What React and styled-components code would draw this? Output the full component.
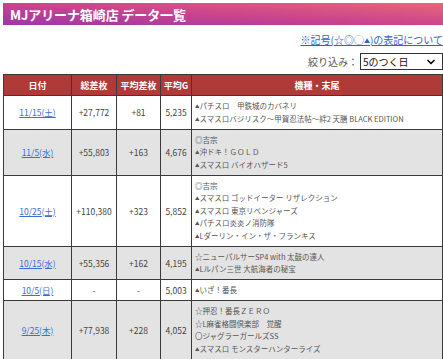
import React from "react";
import styled, { createGlobalStyle } from "styled-components";
import { ChevronDown } from "lucide-react";

const GlobalStyle = createGlobalStyle`
  body {
    margin: 0;
    background: #fff;
    font-family: "Noto Sans CJK JP", "Noto Sans", sans-serif;
  }
`;

const Page = styled.div`
  width: 440px;
  padding: 3px 0 0 3px;
`;

const TitleBar = styled.h1`
  margin: 0;
  height: 22px;
  padding-left: 7px;
  display: flex;
  align-items: center;
  background: linear-gradient(to top right, #9a38a8 0%, #c8428e 45%, #e8667a 100%);
  color: #fff;
  font-size: 13px;
  font-weight: 700;
  letter-spacing: -0.1px;
`;

const NoteRow = styled.div`
  display: flex;
  justify-content: flex-end;
  margin-top: 8px;
  line-height: 14px;
`;

const NoteLink = styled.a`
  color: #2f62c8;
  font-size: 10px;
  text-decoration: underline;
`;

const Tri = styled.span`
  font-size: 0.6em;
  vertical-align: 1px;
`;

const FilterRow = styled.div`
  display: flex;
  justify-content: flex-end;
  align-items: center;
  gap: 2px;
  margin-top: 5px;
  height: 17px;
`;

const FilterLabel = styled.span`
  font-size: 10px;
  color: #555;
`;

const SelectBox = styled.div`
  position: relative;
  width: 83px;
  height: 17px;
  box-sizing: border-box;
  border: 1px solid #333;
  background: #fff;
`;

const Select = styled.select`
  appearance: none;
  display: block;
  border: none;
  background: transparent;
  width: 100%;
  height: 15px;
  margin: 0;
  padding: 0 0 0 2px;
  font-family: inherit;
  font-size: 10px;
  line-height: 15px;
  color: #111;
  outline: none;
`;

const Chevron = styled(ChevronDown)`
  position: absolute;
  right: 5px;
  top: 2px;
  pointer-events: none;
`;

const Table = styled.table`
  margin-top: 4px;
  width: 440px;
  border-collapse: collapse;
  table-layout: fixed;
`;

const Th = styled.th`
  width: ${(p) => p.$w}px;
  height: 20px;
  padding: 0;
  background: #b03a38;
  color: #fff;
  font-size: 9px;
  font-weight: 700;
  border: 1px solid #3a3a3a;
  text-align: center;
`;

const Row = styled.tr`
  background: ${(p) => (p.$shade ? "#e3e3e3" : "#fff")};
`;

const Td = styled.td`
  border: 1px solid #3a3a3a;
  padding: 3px 2px;
  text-align: center;
  font-size: 8.5px;
  color: #444;
`;

const DateLink = styled.a`
  color: #3a6fd6;
  text-decoration: underline;
`;

const ModelCell = styled.td`
  border: 1px solid #3a3a3a;
  padding: 4px 3px 3.5px;
  text-align: left;
  font-size: 7.5px;
  line-height: 12.5px;
  color: #555;
`;

const rows = [
  {
    date: "11/15(土)",
    total: "+27,772",
    avg: "+81",
    games: "5,235",
    models: ["▲パチスロ　甲鉄城のカバネリ", "▲スマスロバジリスク～甲賀忍法帖～絆2 天膳 BLACK EDITION"],
  },
  {
    date: "11/5(水)",
    total: "+55,803",
    avg: "+163",
    games: "4,676",
    models: ["◎吉宗", "▲沖ドキ！ＧＯＬＤ", "▲スマスロ バイオハザード5"],
  },
  {
    date: "10/25(土)",
    total: "+110,380",
    avg: "+323",
    games: "5,852",
    models: [
      "◎吉宗",
      "▲スマスロ ゴッドイーター リザレクション",
      "▲スマスロ 東京リベンジャーズ",
      "▲パチスロ炎炎ノ消防隊",
      "▲Lダーリン・イン・ザ・フランキス",
    ],
  },
  {
    date: "10/15(水)",
    total: "+55,356",
    avg: "+162",
    games: "4,195",
    models: ["☆ニューパルサーSP4 with 太鼓の達人", "▲Lルパン三世 大航海者の秘宝"],
  },
  {
    date: "10/5(日)",
    total: "-",
    avg: "-",
    games: "5,003",
    models: ["▲いざ！番長"],
  },
  {
    date: "9/25(木)",
    total: "+77,938",
    avg: "+228",
    games: "4,052",
    models: ["☆押忍！番長ＺＥＲＯ", "☆L麻雀格闘倶楽部　覚醒", "〇ジャグラーガールズSS", "▲スマスロ モンスターハンターライズ"],
  },
];

// ▲ renders much smaller than the other marks in the original
const withTri = (text) =>
  text.split("▲").map((part, i) => (
    <React.Fragment key={i}>
      {i > 0 && <Tri>▲</Tri>}
      {part}
    </React.Fragment>
  ));

const App = () => {
  return (
    <Page>
      <GlobalStyle />
      <TitleBar>MJアリーナ箱崎店 データ一覧</TitleBar>
      <NoteRow>
        <NoteLink href="#">※記号(☆◎◯<Tri>▲</Tri>)の表記について</NoteLink>
      </NoteRow>
      <FilterRow>
        <FilterLabel>絞り込み：</FilterLabel>
        <SelectBox>
          <Select defaultValue="5">
            <option value="5">5のつく日</option>
          </Select>
          <Chevron size={12} strokeWidth={3.5} color="#111" />
        </SelectBox>
      </FilterRow>
      <Table>
        <thead>
          <tr>
            <Th $w={67}>日付</Th>
            <Th $w={44}>総差枚</Th>
            <Th $w={43}>平均差枚</Th>
            <Th $w={30}>平均G</Th>
            <Th>機種・末尾</Th>
          </tr>
        </thead>
        <tbody>
          {rows.map((r, i) => (
            <Row key={r.date} $shade={i % 2 === 1}>
              <Td>
                <DateLink href="#">{r.date}</DateLink>
              </Td>
              <Td>{r.total}</Td>
              <Td>{r.avg}</Td>
              <Td>{r.games}</Td>
              <ModelCell>
                {r.models.map((m) => (
                  <div key={m}>{withTri(m)}</div>
                ))}
              </ModelCell>
            </Row>
          ))}
        </tbody>
      </Table>
    </Page>
  );
};

export default App;
